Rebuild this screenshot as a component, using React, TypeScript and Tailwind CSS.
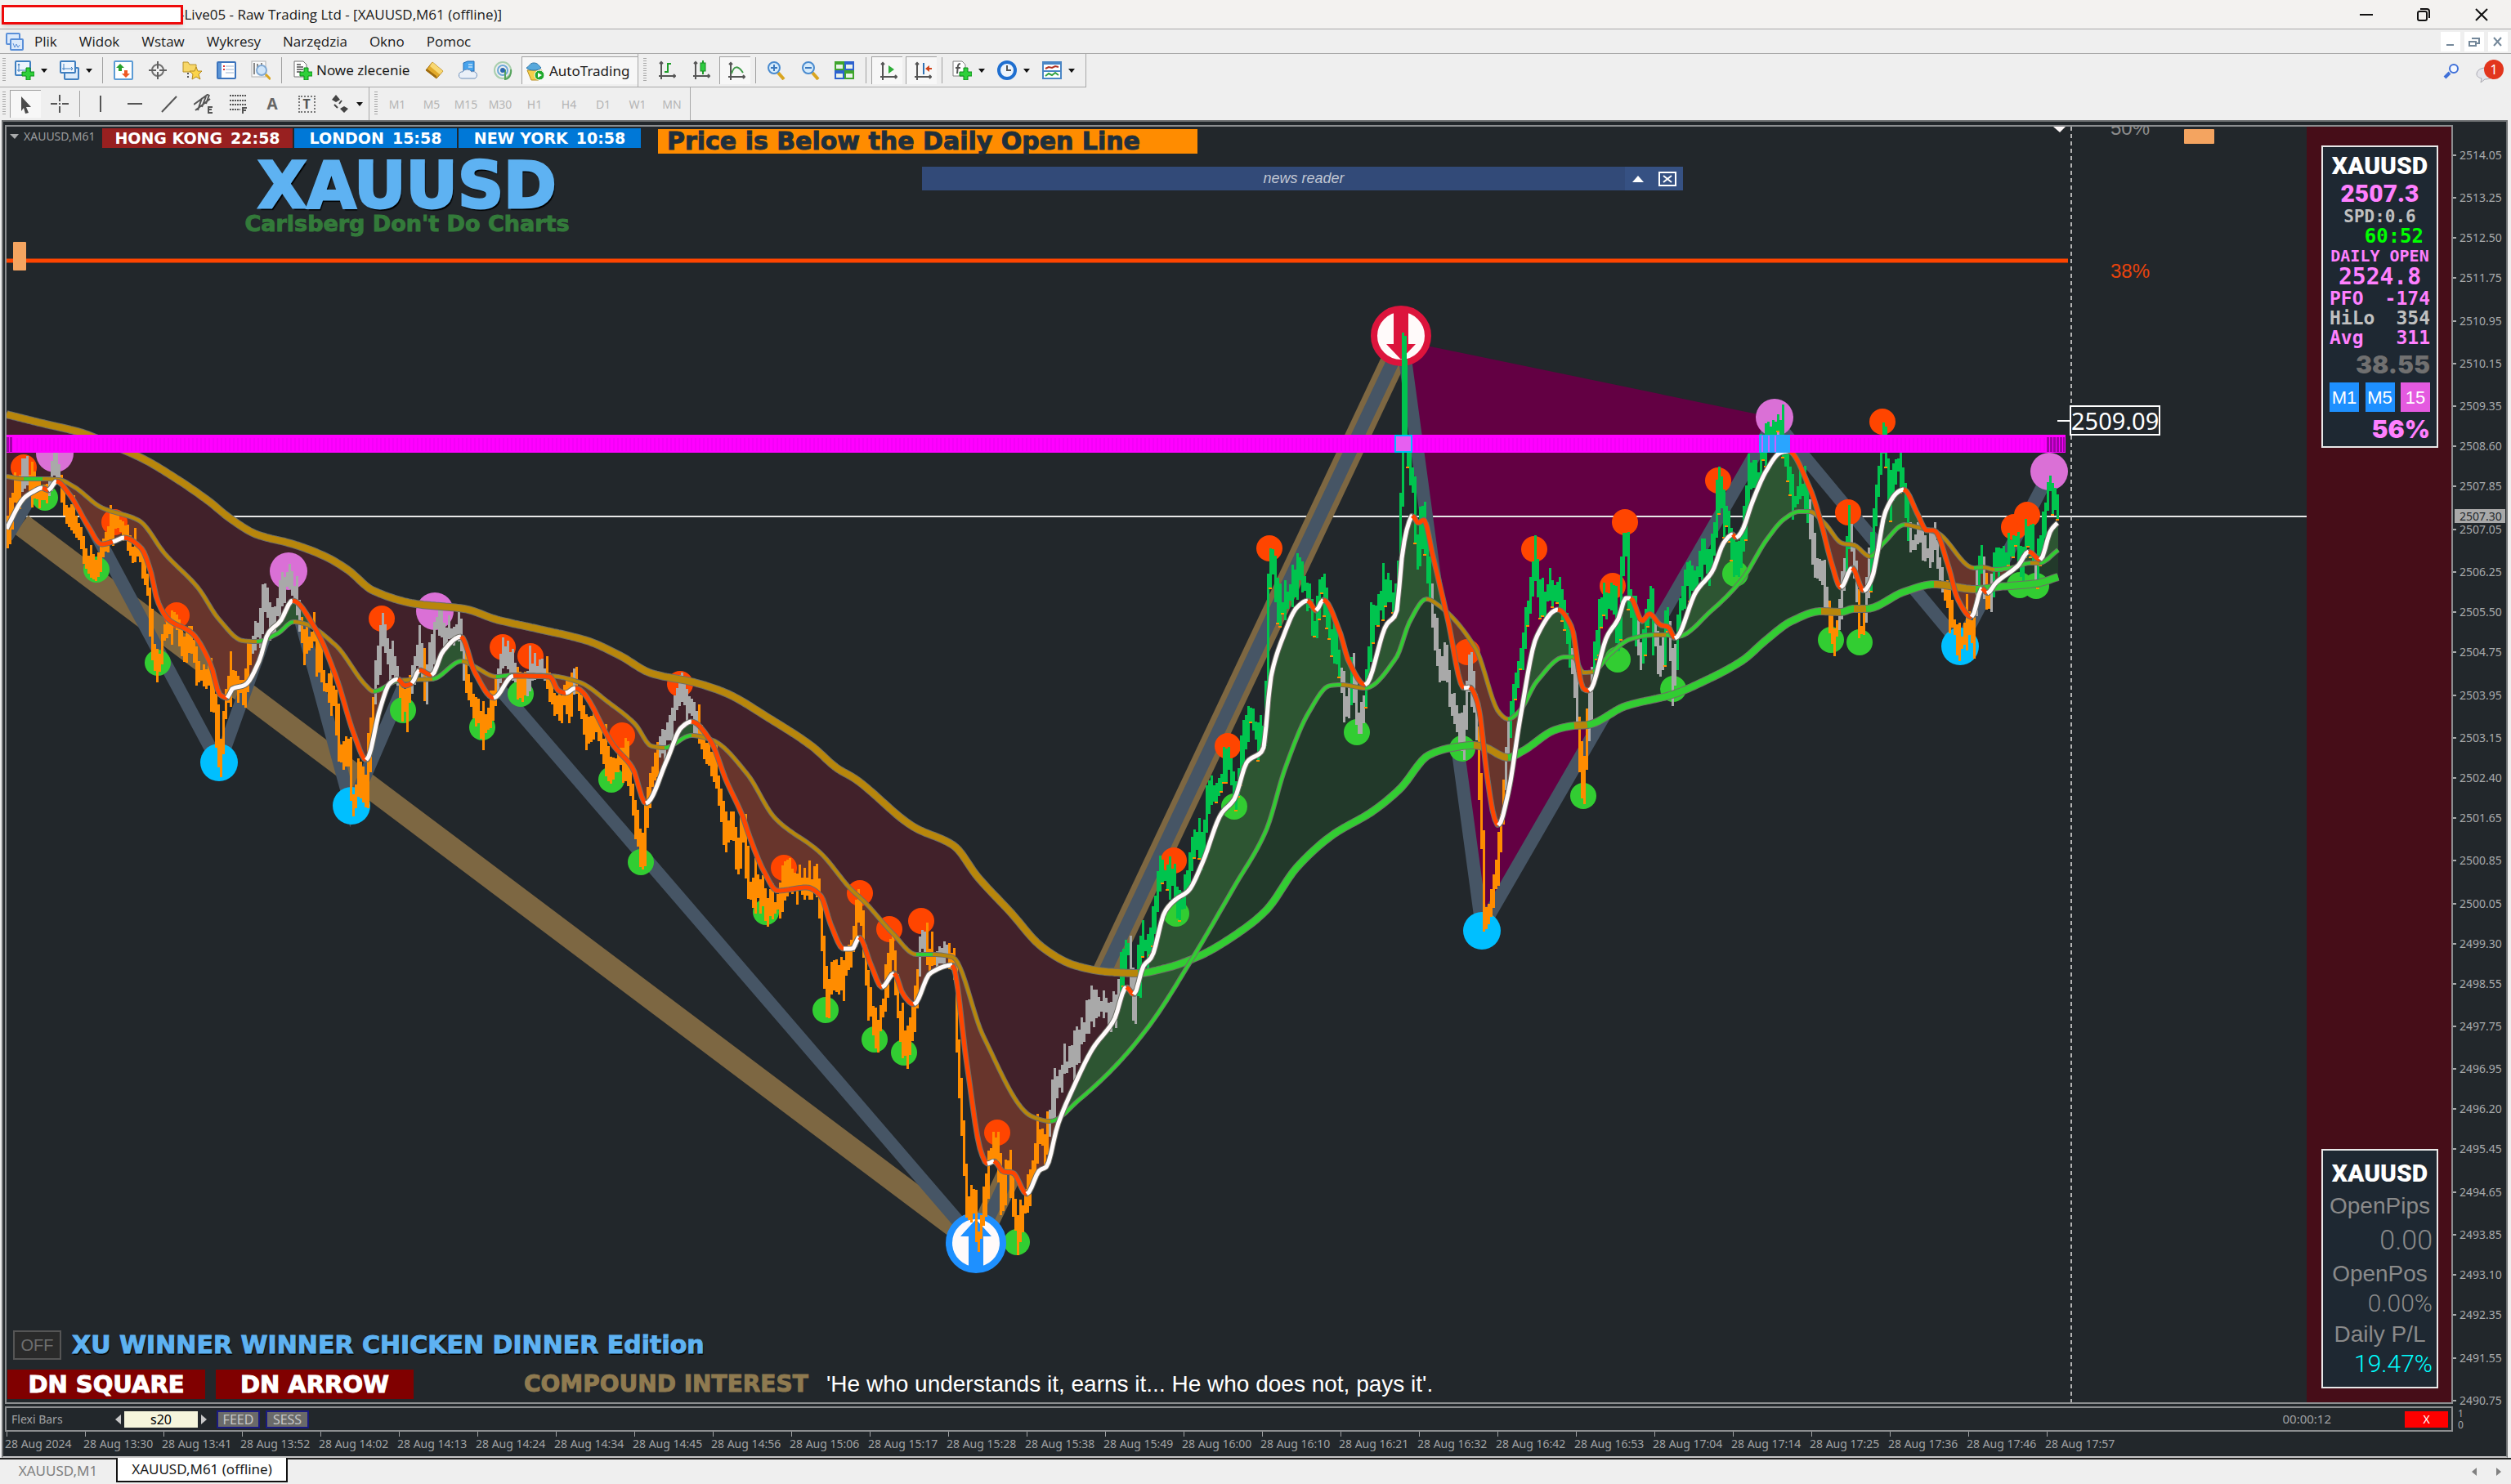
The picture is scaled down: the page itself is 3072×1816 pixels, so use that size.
import React from 'react';

type Point = [number, number];
type Segment = { color: string; points: Point[] };

const UP = '#32cd32';
const DOWN = '#b8860b';
const FAST_UP = '#fffafa';
const FAST_DOWN = '#ff4500';

const parse = (text: string): Point[] =>
  text
    .trim()
    .split(/\s+/)
    .map(pair => pair.split(',').map(Number) as Point);

// Each entry starts where the previous one ended, so the line stays joined
const buildSegments = (parts: [string, string][]): Segment[] => {
  let last: Point | null = null;
  return parts.map(([color, text]) => {
    const own = parse(text);
    const points = last ? [last, ...own] : own;
    last = own[own.length - 1];
    return { color, points };
  });
};

const slow = buildSegments([
  [DOWN, '8,507 52,518 98,529 131,542 176,562 216,586 255,613 281,634 314,654 359,666 398,681 425,697 457,723 509,739 568,745 607,758 660,770 718,784 758,802 797,824 849,835 888,848 941,879 993,913 1024,940 1046,953 1118,1012 1167,1035 1196,1073 1236,1116 1275,1159 1314,1181 1353,1189 1392,1191'],
  [UP, '1425,1185 1467,1170 1510,1145 1549,1114 1587,1061 1630,1022 1679,993 1713,965 1748,924 1776,915 1803,912'],
  [DOWN, '1815,914 1845,927'],
  [UP, '1863,919 1903,893 1926,888'],
  [DOWN, '1942,887'],
  [UP, '1989,864 2046,850 2086,833 2132,808 2161,783 2192,760 2228,748'],
  [DOWN, '2252,749'],
  [UP, '2268,745'],
  [DOWN, '2283,745'],
  [UP, '2330,724 2366,715'],
  [DOWN, '2417,721'],
  [UP, '2446,718 2491,714 2518,706'],
]);

const mid = buildSegments([
  [DOWN, '8,583 29,586'],
  [UP, '52,586'],
  [DOWN, '72,587 91,596 124,621 170,637 202,678 242,719 268,758 297,784 314,785'],
  [UP, '340,775 359,761'],
  [DOWN, '372,763 411,790 447,838 457,846'],
  [UP, '487,833'],
  [DOWN, '500,832 529,831'],
  [UP, '565,809'],
  [DOWN, '581,816 607,828'],
  [UP, '627,826'],
  [DOWN, '673,827 709,835 745,860 777,886 797,913 813,915'],
  [UP, '846,900'],
  [DOWN, '872,906 914,947 948,1001 1004,1044 1040,1087 1059,1105 1092,1142 1121,1168'],
  [UP, '1141,1168'],
  [DOWN, '1165,1171 1203,1268 1262,1366 1285,1372'],
  [UP, '1320,1346 1366,1303 1409,1251 1458,1174 1510,1085 1549,1016 1572,941 1601,872 1627,839 1641,838'],
  [DOWN, '1670,842'],
  [UP, '1708,805 1725,760 1745,733'],
  [DOWN, '1759,740 1805,793 1834,872 1845,880'],
  [UP, '1860,869 1880,834 1914,804 1925,804'],
  [DOWN, '1937,823 1949,822'],
  [UP, '1970,800 1995,782 2023,777'],
  [DOWN, '2038,777'],
  [UP, '2052,779 2094,747 2132,708 2161,661 2183,635 2201,626 2214,626'],
  [DOWN, '2232,640 2254,665 2268,667 2288,681'],
  [UP, '2304,665 2330,642'],
  [DOWN, '2345,645 2370,652 2415,695'],
  [UP, '2426,694'],
  [DOWN, '2440,697'],
  [UP, '2460,695 2484,689'],
  [DOWN, '2495,689'],
  [UP, '2518,673'],
]);

const fast = buildSegments([
  [FAST_UP, '8,647 29,610 40,602 52,597'],
  [FAST_DOWN, '59,600'],
  [FAST_UP, '69,589'],
  [FAST_DOWN, '85,605 108,644 124,666 138,663'],
  [FAST_UP, '152,658'],
  [FAST_DOWN, '173,671 184,698 193,736 206,758 235,775 258,814 269,850 278,854'],
  [FAST_UP, '284,843 300,838 317,809 328,775 343,760 358,735'],
  [FAST_DOWN, '385,768 411,828 434,901 448,930'],
  [FAST_UP, '465,867 477,836 487,831'],
  [FAST_DOWN, '495,839 504,836'],
  [FAST_UP, '513,820'],
  [FAST_DOWN, '528,826'],
  [FAST_UP, '542,797 564,779'],
  [FAST_DOWN, '581,823 604,854'],
  [FAST_UP, '628,827'],
  [FAST_DOWN, '673,828 683,845 692,848'],
  [FAST_UP, '704,842'],
  [FAST_DOWN, '751,913 774,940 790,983'],
  [FAST_UP, '816,930 833,891 846,883'],
  [FAST_DOWN, '869,906 888,954 909,1000 916,1021 935,1067 951,1090 987,1086 1004,1096 1017,1133 1032,1161'],
  [FAST_UP, '1043,1161 1051,1147'],
  [FAST_DOWN, '1066,1182 1079,1208'],
  [FAST_UP, '1094,1191'],
  [FAST_DOWN, '1105,1217 1118,1229'],
  [FAST_UP, '1138,1191 1165,1181'],
  [FAST_DOWN, '1183,1303 1200,1409 1208,1424'],
  [FAST_UP, '1216,1421'],
  [FAST_DOWN, '1228,1434 1239,1435 1256,1461'],
  [FAST_UP, '1272,1432 1280,1428 1294,1377 1314,1329 1337,1283 1363,1248 1378,1208'],
  [FAST_DOWN, '1387,1217'],
  [FAST_UP, '1399,1182 1409,1171 1425,1116 1438,1101 1454,1090 1471,1056 1494,996 1510,978 1526,932 1545,918 1555,828 1570,779 1587,743 1600,735'],
  [FAST_DOWN, '1610,747'],
  [FAST_UP, '1619,734'],
  [FAST_DOWN, '1639,773 1650,809 1670,838'],
  [FAST_UP, '1696,765 1708,751 1716,675 1722,645 1728,631'],
  [FAST_DOWN, '1735,640 1742,636 1753,680 1771,757 1791,842'],
  [FAST_UP, '1798,841'],
  [FAST_DOWN, '1808,861 1820,954 1828,1000 1833,1010'],
  [FAST_UP, '1845,971 1860,878 1880,779 1906,746'],
  [FAST_DOWN, '1923,768 1934,834 1938,844 1944,845'],
  [FAST_UP, '1966,779 1980,757 1989,732 1995,732'],
  [FAST_DOWN, '2009,760 2018,751 2032,765 2041,767 2049,781'],
  [FAST_UP, '2075,724 2095,699 2109,664 2120,654'],
  [FAST_DOWN, '2124,658'],
  [FAST_UP, '2131,650 2144,614 2161,576 2178,554 2188,552'],
  [FAST_DOWN, '2214,597 2228,640 2241,690 2252,719'],
  [FAST_UP, '2266,695'],
  [FAST_DOWN, '2280,723'],
  [FAST_UP, '2290,708 2297,676 2306,628 2322,602 2329,599'],
  [FAST_DOWN, '2346,629 2357,649 2366,649 2384,694 2395,733 2412,755'],
  [FAST_UP, '2425,720'],
  [FAST_DOWN, '2431,726'],
  [FAST_UP, '2442,713 2469,692 2482,675'],
  [FAST_DOWN, '2496,685'],
  [FAST_UP, '2509,649 2517,640'],
]);

const price = parse(`
8,661 13,612 23,590 29,575 36,593 56,605 65,559 71,581 78,620 85,635 98,659 103,688 118,697 127,659 139,634 153,649
160,676 170,668 180,722 186,790 194,811 199,770 214,753 225,794 230,765 242,828 255,819 261,862 268,935 273,872
281,823 297,843 306,790 315,765 321,727 332,760 341,727 351,702 359,727 372,785 384,777 395,838 408,848 415,930
425,916 430,988 438,950 447,974 451,896 460,824 466,758 474,804 483,819 494,867 503,833 511,785 519,843 532,756
542,775 562,768 572,843 590,889 601,862 614,799 627,814 637,848 649,814 666,826 681,867 692,848 702,828 718,906
728,877 745,950 760,916 771,964 786,1051 790,983 800,930 816,891 831,838 846,867 856,906 872,930 886,1016 896,998
899,1050 909,1010 916,1096 925,1073 936,1113 948,1107 961,1073 981,1085 1000,1085 1010,1228 1020,1182 1027,1199
1040,1159 1051,1102 1059,1199 1070,1268 1082,1217 1090,1145 1098,1240 1106,1285 1118,1240 1126,1136 1136,1176
1156,1159 1167,1188 1170,1280 1177,1389 1181,1475 1190,1463 1195,1521 1203,1475 1209,1418 1218,1395 1224,1469
1232,1418 1244,1512 1255,1458 1263,1435 1270,1377 1278,1406 1288,1331 1301,1303 1311,1297 1320,1268 1334,1234
1347,1228 1363,1240 1373,1171 1379,1148 1386,1234 1396,1148 1405,1165 1418,1067 1435,1073 1439,1116 1451,1079
1461,1027 1469,1044 1477,970 1487,970 1502,930 1510,976 1528,866 1539,912 1547,889 1551,707 1554,675 1567,751
1587,691 1601,729 1607,779 1616,702 1627,779 1636,806 1646,872 1653,828 1661,889 1670,845 1676,773 1687,729
1695,713 1705,740 1712,669 1714,548 1716,417 1719,543 1728,592 1733,702 1739,614 1747,697 1753,768 1762,834
1768,812 1774,861 1788,910 1797,806 1805,878 1811,998 1815,1130 1825,1097 1834,1026 1842,916 1848,861 1860,795
1868,746 1877,680 1883,735 1894,724 1907,718 1917,779 1926,834 1935,971 1943,867 1952,779 1960,740 1973,724
1979,801 1983,697 1987,642 1992,724 2006,801 2018,724 2023,779 2032,806 2038,746 2047,839 2052,757 2063,697
2072,713 2081,680 2092,691 2102,592 2112,636 2124,697 2132,631 2141,570 2150,590 2155,543 2173,521 2179,515
2183,558 2194,615 2203,594 2214,629 2219,690 2228,704 2234,733 2240,783 2248,761 2254,708 2261,640 2268,690
2275,783 2286,704 2292,626 2297,583 2303,519 2310,601 2321,558 2328,594 2338,672 2346,647 2357,679 2365,647
2371,697 2379,726 2388,761 2399,786 2406,761 2413,783 2417,711 2422,676 2431,747 2438,697 2442,672 2451,686
2465,654 2471,697 2480,640 2490,701 2500,633 2506,586 2511,606 2517,629`);

const interpolate = (points: Point[]) => (x: number) => {
  const i = points.findIndex(p => p[0] >= x);
  if (i <= 0) return i === 0 ? points[0][1] : points[points.length - 1][1];
  const [x0, y0] = points[i - 1];
  const [x1, y1] = points[i];
  return y0 + ((y1 - y0) * (x - x0)) / (x1 - x0 || 1);
};

// Joined segments repeat their shared point, which is dropped here
const allPoints = (segments: Segment[]) =>
  segments.flatMap(s => s.points).filter((p, i, list) => i === 0 || p[0] > list[i - 1][0]);

// Monotone cubic: smooth, and never past a turning point
const smooth = (points: Point[]) => {
  const slopes = points.slice(1).map((p, i) => (p[1] - points[i][1]) / (p[0] - points[i][0]));
  const tangents = points.map((_, i) => {
    const a = slopes[i - 1];
    const b = slopes[i];
    if (a === undefined) return b;
    if (b === undefined) return a;
    return a * b <= 0 ? 0 : (2 * a * b) / (a + b);
  });
  return (x: number) => {
    const i = points.findIndex(p => p[0] >= x);
    if (i <= 0) return i === 0 ? points[0][1] : points[points.length - 1][1];
    const [x0, y0] = points[i - 1];
    const [x1, y1] = points[i];
    const h = x1 - x0;
    const t = (x - x0) / h;
    return (
      y0 * (2 * t ** 3 - 3 * t ** 2 + 1) +
      h * tangents[i - 1] * (t ** 3 - 2 * t ** 2 + t) +
      y1 * (3 * t ** 2 - 2 * t ** 3) +
      h * tangents[i] * (t ** 3 - t ** 2)
    );
  };
};

const slowAt = smooth(allPoints(slow));
const midAt = smooth(allPoints(mid));
const fastAt = smooth(allPoints(fast));
const priceAt = interpolate(price);

const trace = (at: (x: number) => number, from: number, to: number) => {
  let d = `M${from} ${at(from).toFixed(1)}`;
  for (let x = from + 3; x < to; x += 3) d += `L${x} ${at(x).toFixed(1)}`;
  return `${d}L${to} ${at(to).toFixed(1)}`;
};

// Clouds between two averages, one path per colour
const cloud = (a: (x: number) => number, b: (x: number) => number, above: boolean) => {
  let d = '';
  for (let x = 8; x < 2518; x += 2) {
    const ya = a(x + 1);
    const yb = b(x + 1);
    if (ya < yb === above) d += `M${x} ${Math.round(ya)}H${x + 2}V${Math.round(yb)}H${x}Z`;
  }
  return d;
};

const noise = (n: number) => {
  const v = Math.sin(n * 12.9898) * 43758.5453;
  return v - Math.floor(v);
};

const bars: Record<string, string> = { '#ff8c00': '', '#a9a9a9': '', '#00c44e': '' };
let closeTicks = '';
for (let x = 9; x <= 2517; x += 3) {
  const from = priceAt(x - 3);
  const to = priceAt(x);
  const i = Math.round(x / 3);
  const top = Math.round(Math.min(from, to) - 2 - noise(i) * noise(i + 7) * 34);
  const bottom = Math.round(Math.max(from, to) + 6 + noise(i + 400) * noise(i + 31) * 34);
  const overMid = to < midAt(x);
  const overSlow = to < slowAt(x);
  const color = overMid && overSlow ? '#00c44e' : overMid || overSlow ? '#a9a9a9' : '#ff8c00';
  bars[color] += `M${x} ${top}V${bottom}`;
  if (color === '#00c44e' && noise(i + 90) > 0.6) closeTicks += `M${x - 2} ${bottom}h4`;
}

const swings: { color: string; r: number; at: string }[] = [
  {
    color: '#ff4500',
    r: 16,
    at: '29,572 140,639 216,753 467,757 615,792 649,803 832,837 761,900 959,1062 1052,1093 1088,1137 1127,1127 1220,1386 1436,1053 1502,913 1553,671 1795,798 1877,672 1988,639 1973,717 2102,588 2303,516 2261,627 2464,645 2480,630',
  },
  {
    color: '#32cd32',
    r: 16,
    at: '55,609 118,697 193,811 493,869 590,890 637,849 748,954 784,1055 937,1116 1010,1236 1070,1272 1106,1288 1244,1520 1439,1118 1510,987 1660,896 1789,916 1937,974 1979,807 2047,843 2123,702 2240,783 2275,786 2471,716 2491,717',
  },
  { color: '#da70d6', r: 23, at: '67,555 353,699 532,748 2171,511 2507,577' },
  { color: '#00bfff', r: 23, at: '268,933 430,986 1813,1139 2398,791' },
];

interface AverageProps {
  segments: Segment[];
  at: (x: number) => number;
  width: number;
}

const Average = ({ segments, at, width }: AverageProps) => (
  <g fill="none" strokeLinejoin="round">
    <path d={trace(at, 8, 2518)} stroke="#6e6e66" strokeWidth={width + 2} />
    {segments.map(({ color, points }, i) => (
      <path key={i} d={trace(at, points[0][0], points[points.length - 1][0])} stroke={color} strokeWidth={width} />
    ))}
  </g>
);

const PriceChart = () => (
  <svg viewBox="8 155 2814 1561" className="block h-auto w-full" role="img" aria-label="XAUUSD M61 price chart">
    <path d="M1716 417L2170 511L1813 1135Z" fill="#630043" />
    <path d="M8 632H2822" stroke="#e8e8e8" strokeWidth="2" />
    <path d="M26 642L1195 1521" stroke="#7d6742" strokeWidth="28" />
    <path d="M1195 1521L1716 417" stroke="#7d6742" strokeWidth="30" />
    <path
      d="M8 657L67 559L268 935L352 700L430 988L532 751L1195 1521L1716 417L1813 1135L2171 515L2398 788L2507 580"
      fill="none"
      stroke="#465565"
      strokeWidth="16"
    />
    <g shapeRendering="crispEdges">
      <path d={cloud(slowAt, midAt, true)} fill="#41212a" />
      <path d={cloud(midAt, slowAt, true)} fill="#22392a" />
      <path d={cloud(midAt, fastAt, true)} fill="#68352c" />
      <path d={cloud(fastAt, midAt, true)} fill="#2d5532" />
    </g>
    {swings.map(s => (
      <g key={s.at} fill={s.color}>
        {parse(s.at).map(([x, y]) => (
          <circle key={`${x}-${y}`} cx={x} cy={y} r={s.r} />
        ))}
      </g>
    ))}
    <g>
      <circle cx="1714" cy="411" r="33" fill="#fffafa" stroke="#dc143c" strokeWidth="8" />
      <path d="M1705 382h18v39h9l-18 19l-18 -19h9z" fill="#dc143c" />
      <circle cx="1194" cy="1521" r="33" fill="#fffafa" stroke="#1e90ff" strokeWidth="8" />
      <path d="M1185 1550h18v-37h10l-19 -21l-19 21h10z" fill="#1e90ff" />
    </g>
    <g strokeWidth="3" shapeRendering="crispEdges">
      {Object.entries(bars).map(([color, d]) => (
        <path key={color} d={d} stroke={color} />
      ))}
      <path d="M1716 414V560M1720 440V552" stroke="#00c44e" />
      <path d={closeTicks} stroke="#ff8c00" strokeWidth="2" />
    </g>
    <Average segments={slow} at={slowAt} width={8} />
    <Average segments={mid} at={midAt} width={4} />
    <Average segments={fast} at={fastAt} width={5} />

    <path d="M8 319H2530" stroke="#ff4500" strokeWidth="5" />
    <rect x="16" y="296" width="16" height="35" rx="1" fill="#f4a460" />
    <rect x="2672" y="158" width="37" height="18" rx="1" fill="#f4a460" />

    {/* supply zone */}
    <rect x="8" y="532" width="2519" height="22" fill="#ff00ff" />
    <path d="M20 544H2502" stroke="#f400f8" strokeWidth="16" strokeDasharray="2 3" />
    <path d="M8 544H15M2504 544H2526" stroke="#a000a8" strokeWidth="18" strokeDasharray="3 1" />
    <rect x="1707" y="533" width="20" height="20" fill="#e65ff0" stroke="#00bfff" strokeWidth="2" />
    <rect x="2152" y="532" width="38" height="22" fill="#29a5ff" />
    <path d="M2156 533V553M2164 533V553M2172 533V553" stroke="#d05cff" strokeWidth="2" />

    <path d="M2534 155V1716" stroke="#b4b4b4" strokeWidth="2" strokeDasharray="5 4" />
    <path d="M2512 155h15l-7 7z" fill="#fffafa" />
    <path d="M2517 515H2533" stroke="#ffffff" strokeWidth="2" />
    <rect x="2533" y="497" width="109" height="35" fill="#22272b" stroke="#ffffff" strokeWidth="2" />
    <g className="font-['Noto_Sans',sans-serif] text-[29px]">
      <text x="2534" y="526" fill="#ffffff">2509.09</text>
    </g>
    <g className="font-['Liberation_Sans',sans-serif] text-[24px]">
      <text x="2582" y="165" fill="#8c8c8c">50%</text>
      <text x="2582" y="340" fill="#e8430c">38%</text>
    </g>
  </svg>
);

const SCALE = [
  2514.05, 2513.25, 2512.5, 2511.75, 2510.95, 2510.15, 2509.35, 2508.6, 2507.85, 2507.05, 2506.25, 2505.5, 2504.75,
  2503.95, 2503.15, 2502.4, 2501.65, 2500.85, 2500.05, 2499.3, 2498.55, 2497.75, 2496.95, 2496.2, 2495.45, 2494.65,
  2493.85, 2493.1, 2492.35, 2491.55, 2490.75,
];

const PriceScale = () => (
  <svg
    viewBox="3001 153 65 1628"
    className="block h-[1628px] w-[65px] shrink-0 font-['Noto_Sans',sans-serif] text-[14px]"
    fill="#a8aaab"
  >
    {SCALE.map(value => {
      const y = Math.round(190 + (2514.05 - value) * 65.4);
      return (
        <g key={value}>
          <path d={`M3001 ${y}h4`} stroke="#a8aaab" strokeWidth="2" />
          <text x="3009" y={y + 5}>{value.toFixed(2)}</text>
        </g>
      );
    })}
    <rect x="3003" y="623" width="62" height="17" fill="#a9a9a9" />
    <text x="3009" y="637" fill="#22272b">2507.30</text>
    <g className="text-[12px]">
      <text x="3007" y="1734">1</text>
      <text x="3007" y="1748">0</text>
    </g>
  </svg>
);

const TIMES = [
  '2024', '13:30', '13:41', '13:52', '14:02', '14:13', '14:24', '14:34', '14:45', '14:56', '15:06', '15:17', '15:28',
  '15:38', '15:49', '16:00', '16:10', '16:21', '16:32', '16:42', '16:53', '17:04', '17:14', '17:25', '17:36', '17:46',
  '17:57',
];

/* ---------- toolbar icons ---------- */

const Icon = ({ children }: { children: React.ReactNode }) => (
  <svg viewBox="0 0 24 24" className="size-6 shrink-0" fill="none" aria-hidden="true">
    {children}
  </svg>
);

const Plus = () => <path d="M14 9h5v5h5v5h-5v5h-5v-5h-5v-5h5z" fill="#2fd03a" stroke="#0b8a16" />;

const NewChartIcon = () => (
  <Icon>
    <rect x="1" y="1" width="18" height="17" rx="1" fill="#eef5fd" stroke="#3f7fc0" strokeWidth="2" />
    <path d="M5 4v10M3 12h12M4 6l1-2 1 2" stroke="#3f7fc0" />
    <Plus />
  </Icon>
);

const ProfilesIcon = () => (
  <Icon>
    <rect x="6" y="9" width="17" height="14" rx="1" fill="#dcebfa" stroke="#3f7fc0" strokeWidth="2" />
    <rect x="1" y="1" width="18" height="14" rx="1" fill="#eef5fd" stroke="#3f7fc0" strokeWidth="2" />
    <path d="M5 4v8M3 10h13M14 8l2 2-2 2" stroke="#3f7fc0" />
  </Icon>
);

const MarketIcon = () => (
  <Icon>
    <rect x="1" y="1" width="22" height="22" rx="1" fill="#fff" stroke="#5b9bd5" strokeWidth="2" />
    <path d="M8 4l5 5h-3v4H6V9H3z" fill="#27a02b" />
    <path d="M15 21l-5-5h3v-4h4v4h3z" fill="#ee5a24" />
  </Icon>
);

const CrosshairIcon = () => (
  <Icon>
    <circle cx="12" cy="12" r="7" stroke="#707070" strokeWidth="2" />
    <path d="M12 1v9M12 14v9M1 12h9M14 12h9" stroke="#606060" strokeWidth="2" />
  </Icon>
);

const NavigatorIcon = () => (
  <Icon>
    <path d="M1 2h6l2 3h8v9H1z" fill="#f7d768" stroke="#b8922a" />
    <path d="M7 15v8" stroke="#555" strokeWidth="2" strokeDasharray="2 2" />
    <path d="M17 8l2 5h5l-4 4 2 6-5-3-5 3 1-6-4-4h6z" fill="#fbd44a" stroke="#b58a20" />
  </Icon>
);

const TerminalIcon = () => (
  <Icon>
    <rect x="1" y="2" width="22" height="20" rx="1" fill="#fff" stroke="#3c74bd" strokeWidth="2" />
    <rect x="2" y="3" width="4" height="18" fill="#5c95d6" />
    <path d="M8 7h2M8 11h2" stroke="#d33" strokeWidth="2" />
    <path d="M11 7h10M11 11h10M11 15h10" stroke="#9db4d0" />
  </Icon>
);

const TesterIcon = () => (
  <Icon>
    <rect x="1" y="1" width="17" height="19" fill="#fafafa" stroke="#b0b0b0" />
    <path d="M4 3v14M8 4v9M13 3v6" stroke="#888" strokeWidth="2" />
    <circle cx="13" cy="12" r="6" fill="#cfe5fa" stroke="#7fa8d2" strokeWidth="2" />
    <path d="M18 17l6 6" stroke="#d9a520" strokeWidth="3" />
  </Icon>
);

const OrderIcon = () => (
  <Icon>
    <path d="M2 1h11l4 4v15H2z" fill="#fff" stroke="#707070" />
    <path d="M5 5h5M5 8h8M5 11h8M5 14h5" stroke="#777" strokeWidth="2" />
    <Plus />
  </Icon>
);

const GoldIcon = () => (
  <Icon>
    <path d="M10 2l13 11-8 9L2 12z" fill="#e2aa2b" stroke="#a87412" />
    <path d="M10 2l13 11-4 4L7 7z" fill="#f8d873" />
    <path d="M2 12l13 10v-3L3 10z" fill="#9c6a10" />
  </Icon>
);

const CloudIcon = () => (
  <Icon>
    <path d="M6 3l5-2h8v12H6z" fill="#47a3ec" stroke="#1f6db8" />
    <path d="M12 5h5M12 8h5" stroke="#fff" />
    <path d="M4 22a4 4 0 0 1 1-8 6 5 0 0 1 11 0 4 4 0 0 1 4 8z" fill="#eaf0f8" stroke="#6d8fba" />
  </Icon>
);

const SignalIcon = () => (
  <Icon>
    <circle cx="12" cy="12" r="10" stroke="#a9cfae" strokeWidth="2" />
    <circle cx="12" cy="12" r="6" stroke="#6ba8d8" strokeWidth="2" />
    <path d="M12 12h3v11c5-1 8-6 7-12" stroke="#55a35c" strokeWidth="2" />
    <circle cx="12" cy="12" r="3" fill="#2c69b0" />
  </Icon>
);

const AutoIcon = () => (
  <Icon>
    <path d="M2 11h18l-4 12H7z" fill="#f4cf4a" stroke="#b98d1d" />
    <path d="M1 8c3-1 4-6 9-6s6 3 9 6c-3 4-15 4-18 0z" fill="#58a9dc" stroke="#2d76a9" />
    <circle cx="17" cy="17" r="6" fill="#20a82c" stroke="#fff" />
    <path d="M15 14l5 3-5 3z" fill="#fff" />
  </Icon>
);

const Axes = () => <path d="M6 2v21M3 19h20M4 4l2-2 2 2M21 17l2 2-2 2" stroke="#555" strokeWidth="2" />;

const BarsIcon = () => (
  <Icon>
    <Axes />
    <path d="M14 3v12M14 4h4M10 14h4" stroke="#1e9e2a" strokeWidth="2" />
  </Icon>
);

const CandlesIcon = () => (
  <Icon>
    <Axes />
    <path d="M15 0v17" stroke="#1e9e2a" strokeWidth="2" />
    <rect x="12" y="3" width="6" height="10" fill="#2ecc40" stroke="#148a20" />
  </Icon>
);

const LineIcon = () => (
  <Icon>
    <Axes />
    <path d="M7 15c3-10 8-10 14-1" stroke="#3f9a48" strokeWidth="2" />
  </Icon>
);

const ZoomIcon = ({ plus }: { plus?: boolean }) => (
  <Icon>
    <path d="M15 15l7 8" stroke="#d9a520" strokeWidth="4" />
    <circle cx="10" cy="9" r="7" fill="#d6ebfb" stroke="#4a8bcf" strokeWidth="2" />
    <path d={plus ? 'M6 9h8M10 5v8' : 'M6 9h8'} stroke="#3a78bd" strokeWidth="2" />
  </Icon>
);

const TileIcon = () => (
  <Icon>
    <path d="M0 1h12v11H0zM12 12h12v11H12z" fill="#3fa52c" />
    <path d="M12 1h12v11H12zM0 12h12v11H0z" fill="#2d62cf" />
    <path d="M2 5h8v5H2zM14 5h8v5h-8zM2 16h8v5H2zM14 16h8v5h-8z" fill="#e9f3ea" />
  </Icon>
);

const ScrollIcon = () => (
  <Icon>
    <Axes />
    <path d="M13 5l7 5-7 5z" fill="#2fae3a" />
  </Icon>
);

const ShiftIcon = () => (
  <Icon>
    <Axes />
    <path d="M14 2v14" stroke="#2f72b5" strokeWidth="2" />
    <path d="M16 9l5-4v3h3v2h-3v3z" fill="#d0431a" />
  </Icon>
);

const IndicatorIcon = () => (
  <Icon>
    <path d="M1 1h11l4 4v14H1z" fill="#fff" stroke="#808080" />
    <path d="M10 4c-4 0-3 4-4 12M4 9h6" stroke="#555" strokeWidth="2" />
    <Plus />
  </Icon>
);

const ClockIcon = () => (
  <Icon>
    <circle cx="12" cy="12" r="10" fill="#eef5fc" stroke="#1f6fd0" strokeWidth="4" />
    <path d="M12 6v6h5" stroke="#555" strokeWidth="2" />
  </Icon>
);

const TemplateIcon = () => (
  <Icon>
    <rect x="1" y="2" width="22" height="20" fill="#fff" stroke="#4a86c5" strokeWidth="2" />
    <path d="M2 4h20M2 13h20" stroke="#4a86c5" strokeWidth="2" />
    <path d="M4 10l4-2 4 1 4-2 4 1" stroke="#b03020" strokeWidth="2" />
    <path d="M4 19l4-3 4 2 4-3 4 3" stroke="#30a040" strokeWidth="2" />
  </Icon>
);

const Caret = () => (
  <svg viewBox="0 0 8 5" className="h-[5px] w-2 shrink-0" aria-hidden="true">
    <path d="M0 0h8L4 5z" fill="#111" />
  </svg>
);

const Grip = () => (
  <span className="mx-[3px] h-[30px] w-1 shrink-0 bg-[repeating-linear-gradient(#a8a8a8_0_1px,#efefef_1px_3px)]" />
);

const Divider = () => <span className="h-8 w-px shrink-0 bg-[#a0a0a0]" />;

interface ToolProps {
  label: string;
  children: React.ReactNode;
  pressed?: boolean;
  menu?: boolean;
}

const Tool = ({ label, children, pressed, menu }: ToolProps) => (
  <button
    type="button"
    aria-label={label}
    className={
      'flex shrink-0 items-center justify-center ' +
      (menu ? 'w-[55px] gap-2 ' : pressed ? 'mx-[2px] w-[38px] ' : 'w-[42px] ') +
      (pressed ? 'h-[34px] border-t border-l border-[#a0a0a0] bg-[#f7f7f7]' : 'h-[34px]')
    }
  >
    {children}
    {menu && <Caret />}
  </button>
);

const TitleBar = () => (
  <header className="flex h-[35px] items-center justify-between bg-[#f3f2f0] text-[#1a1a1a]">
    <div className="flex items-center">
      <span className="z-10 ml-[2px] h-6 w-[222px] border-[3px] border-[#ee0a0a] bg-white shadow-md" />
      <h1 className="-ml-1 font-['Open_Sans',sans-serif] text-[17px]">-Live05 - Raw Trading Ltd - [XAUUSD,M61 (offline)]</h1>
    </div>
    <div className="flex">
      <button type="button" aria-label="Minimize" className="flex w-[70px] justify-center">
        <svg viewBox="0 0 16 16" className="size-4"><path d="M0 8h16" stroke="#111" strokeWidth="2" /></svg>
      </button>
      <button type="button" aria-label="Restore" className="flex w-[70px] justify-center">
        <svg viewBox="0 0 16 16" className="size-4" fill="none" stroke="#111" strokeWidth="2">
          <rect x="1" y="4" width="11" height="11" rx="2" />
          <path d="M4 1h8a3 3 0 0 1 3 3v8" />
        </svg>
      </button>
      <button type="button" aria-label="Close" className="flex w-[72px] justify-center">
        <svg viewBox="0 0 16 16" className="size-4"><path d="M1 1l14 14M15 1L1 15" stroke="#111" strokeWidth="2" /></svg>
      </button>
    </div>
  </header>
);

const WINDOW_BUTTONS = [
  { label: 'Minimize chart', d: 'M3 12h9' },
  { label: 'Restore chart', d: 'M5 4h9v6h-3M2 8h8v5H2z' },
  { label: 'Close chart', d: 'M3 3l9 10M12 3L3 13' },
];

const MenuBar = () => (
  <nav className="flex h-[31px] items-center justify-between border-y border-[#a8a8a8] bg-[#efefef] pr-1">
    <div className="flex items-center gap-[27px] font-['Open_Sans',sans-serif] text-[17px] text-[#1a1a1a]">
      <div className="flex items-center gap-[13px] pl-[7px]">
        <svg viewBox="0 0 22 22" className="size-[22px]" fill="#dbe9fb" stroke="#5a8fd8" strokeWidth="2">
          <rect x="1" y="1" width="16" height="13" rx="1" />
          <rect x="6" y="8" width="15" height="13" rx="1" />
          <path d="M9 13l2 5 2-4 2 4 2-3" fill="none" strokeWidth="1" />
        </svg>
        <button type="button">Plik</button>
      </div>
      {['Widok', 'Wstaw', 'Wykresy', 'Narzędzia', 'Okno', 'Pomoc'].map(item => (
        <button key={item} type="button">{item}</button>
      ))}
    </div>
    <div className="flex gap-[5px]">
      {WINDOW_BUTTONS.map(b => (
        <button key={b.label} type="button" aria-label={b.label} className="flex h-6 w-6 items-center justify-center bg-white">
          <svg viewBox="0 0 16 16" className="size-4" fill="none">
            <path d={b.d} stroke="#74889a" strokeWidth="2" />
          </svg>
        </button>
      ))}
    </div>
  </nav>
);

const MainToolbar = () => (
  <div className="flex h-[41px] items-center justify-between bg-[#efefef]">
    <div className="flex h-full items-center border-r border-b border-[#a8a8a8] pr-[6px] font-['Noto_Sans',sans-serif] text-[17px] text-[#1a1a1a]">
      <Grip />
      <Tool label="New chart" menu><NewChartIcon /></Tool>
      <Tool label="Profiles" menu><ProfilesIcon /></Tool>
      <span className="w-[5px]" />
      <Divider />
      <span className="w-1" />
      <Tool label="Market watch"><MarketIcon /></Tool>
      <Tool label="Data window"><CrosshairIcon /></Tool>
      <Tool label="Navigator"><NavigatorIcon /></Tool>
      <Tool label="Terminal"><TerminalIcon /></Tool>
      <Tool label="Strategy tester"><TesterIcon /></Tool>
      <span className="w-1" />
      <Divider />
      <button type="button" className="ml-[13px] flex w-[152px] items-center gap-[5px] whitespace-nowrap">
        <OrderIcon />
        Nowe zlecenie
      </button>
      <Tool label="MetaEditor"><GoldIcon /></Tool>
      <Tool label="Cloud"><CloudIcon /></Tool>
      <Tool label="Signals"><SignalIcon /></Tool>
      <button
        type="button"
        className="ml-[2px] flex h-[34px] w-[142px] items-center gap-[5px] border-t border-l border-[#a0a0a0] bg-[#f7f7f7] pl-1"
      >
        <AutoIcon />
        AutoTrading
      </button>
      <span className="mr-[3px] h-full w-px bg-[#a8a8a8]" />
      <Grip />
      <Tool label="Bar chart"><BarsIcon /></Tool>
      <Tool label="Candlesticks"><CandlesIcon /></Tool>
      <Tool label="Line chart" pressed><LineIcon /></Tool>
      <span className="w-1" />
      <Divider />
      <span className="w-[3px]" />
      <Tool label="Zoom in"><ZoomIcon plus /></Tool>
      <Tool label="Zoom out"><ZoomIcon /></Tool>
      <Tool label="Tile windows"><TileIcon /></Tool>
      <span className="w-[5px]" />
      <Divider />
      <span className="w-1" />
      <Tool label="Auto scroll" pressed><ScrollIcon /></Tool>
      <Tool label="Chart shift" pressed><ShiftIcon /></Tool>
      <span className="w-1" />
      <Divider />
      <span className="w-1" />
      <Tool label="Indicators" menu><IndicatorIcon /></Tool>
      <Tool label="Periods" menu><ClockIcon /></Tool>
      <Tool label="Templates" menu><TemplateIcon /></Tool>
    </div>
    <div className="flex items-center gap-[18px] pr-[9px]">
      <button type="button" aria-label="Search">
        <svg viewBox="0 0 20 20" className="size-5" fill="none">
          <path d="M2 18l6-6" stroke="#3f70d8" strokeWidth="4" />
          <circle cx="13" cy="7" r="5" fill="#f4f8ff" stroke="#3f70d8" strokeWidth="2" />
        </svg>
      </button>
      <button type="button" aria-label="Notifications" className="relative h-7 w-9">
        <svg viewBox="0 0 36 28" className="h-7 w-9">
          <path d="M3 18c0-5 5-8 11-8s9 4 9 8-5 6-10 6l-5 4 1-5c-4-1-6-3-6-5z" fill="#e4e4ea" stroke="#a8a8b0" />
          <circle cx="24" cy="12" r="12" fill="#e2351d" />
        </svg>
        <span className="absolute top-0 right-0 w-6 text-center text-[16px] text-white">1</span>
      </button>
    </div>
  </div>
);

const DRAW_TOOLS = [
  { label: 'Vertical line', d: 'M12 2v20' },
  { label: 'Horizontal line', d: 'M3 12h18' },
  { label: 'Trend line', d: 'M3 22L21 3' },
];

const DrawToolbar = () => (
  <div className="flex h-[40px] items-center bg-[#efefef] font-['Noto_Sans',sans-serif]">
    <Grip />
    <Tool label="Cursor" pressed>
      <Icon><path d="M6 2l12 13h-6l3 7-4 1-2-7-3 4z" fill="#4a4a4a" /></Icon>
    </Tool>
    <Tool label="Crosshair">
      <Icon><path d="M12 1v8M12 15v8M1 12h8M15 12h8M12 11v2" stroke="#555" strokeWidth="2" /></Icon>
    </Tool>
    <span className="w-[3px]" />
    <Divider />
    <span className="w-1" />
    {DRAW_TOOLS.map(tool => (
      <Tool key={tool.label} label={tool.label}>
        <Icon><path d={tool.d} stroke="#555" strokeWidth="2" /></Icon>
      </Tool>
    ))}
    <Tool label="Equidistant channel">
      <Icon>
        <path d="M0 13L18 0M2 20L20 6M5 20l5-15M10 16l5-13M15 12l4-11" stroke="#555" strokeWidth="2" />
        <path d="M23 16h-5v7h5M18 19h4" stroke="#555" strokeWidth="2" />
      </Icon>
    </Tool>
    <Tool label="Fibonacci retracement">
      <Icon>
        <path d="M2 2h20M2 8h20M2 13h20M2 19h13" stroke="#555" strokeWidth="2" strokeDasharray="2 1" />
        <path d="M23 17h-5v7M18 20h4" stroke="#555" strokeWidth="2" />
      </Icon>
    </Tool>
    <Tool label="Text"><span className="text-[19px] font-bold text-[#666]">A</span></Tool>
    <Tool label="Text label">
      <span className="flex size-[21px] items-center justify-center border-2 border-dotted border-[#777] text-[16px] font-bold text-[#555]">T</span>
    </Tool>
    <Tool label="Arrows" menu>
      <Icon>
        <path d="M7 1l5 6-5 3-5-3zM17 23l5-5-5-3-5 3z" fill="#444" />
        <path d="M5 13l4 4M11 12l3-4" stroke="#444" strokeWidth="2" />
      </Icon>
    </Tool>
    <span className="mr-[3px] h-full w-px bg-[#a8a8a8]" />
    <Grip />
    {['M1', 'M5', 'M15', 'M30', 'H1', 'H4', 'D1', 'W1', 'MN'].map(period => (
      <button key={period} type="button" disabled className="w-[42px] text-center text-[14px] text-[#b4b4b4]">
        {period}
      </button>
    ))}
    <span className="ml-px h-full w-px bg-[#a8a8a8]" />
  </div>
);

/* ---------- chart overlays ---------- */

const CLOCKS = [
  { city: 'HONG KONG', time: '22:58', box: 'w-[233px] bg-[#982020]' },
  { city: 'LONDON', time: '15:58', box: 'w-[199px] bg-[#0078d7]' },
  { city: 'NEW YORK', time: '10:58', box: 'w-[223px] bg-[#0078d7]' },
];

const ChartHeader = () => (
  <div className="absolute top-[2px] left-1 flex items-start whitespace-nowrap">
    <span className="flex h-6 w-[113px] items-start gap-[6px] font-['Noto_Sans',sans-serif] text-[14px] leading-5 text-[#9a9c9e]">
      <svg viewBox="0 0 11 6" className="mt-[7px] h-[6px] w-[11px]"><path d="M0 0h11L6 6z" fill="#a8aaab" /></svg>
      XAUUSD,M61
    </span>
    <div className="flex gap-[2px]">
      {CLOCKS.map(c => (
        <span
          key={c.city}
          className={`flex h-6 items-center justify-center gap-[10px] font-['DejaVu_Sans',sans-serif] text-[19px] font-bold text-white ${c.box}`}
        >
          <span>{c.city}</span>
          <span>{c.time}</span>
        </span>
      ))}
    </div>
    <span className="mt-px ml-[21px] flex h-[30px] w-[660px] items-center bg-[#ff8c00] pl-[11px] font-['DejaVu_Sans',sans-serif] text-[30px] leading-[30px] font-bold text-[#1f2f3c] [-webkit-text-stroke:1px_#1f2f3c]">
      Price is Below the Daily Open Line
    </span>
  </div>
);

const NewsReader = () => (
  <div className="absolute top-[49px] left-[1120px] flex h-[29px] w-[931px] items-center bg-[#324a78]">
    <span className="flex-1 pl-[74px] text-center font-['Liberation_Sans',sans-serif] text-[18px] text-[#c0c6d2] italic">
      news reader
    </span>
    <button type="button" aria-label="Collapse news" className="flex h-full w-8 items-center justify-center bg-[#365183]">
      <svg viewBox="0 0 14 8" className="h-2 w-[14px]"><path d="M0 8h14L7 0z" fill="#fff" /></svg>
    </button>
    <button type="button" aria-label="Close news" className="flex h-full w-[39px] items-center justify-center bg-[#365183]">
      <svg viewBox="0 0 22 18" className="h-[18px] w-[22px]" fill="none" stroke="#fff" strokeWidth="2">
        <rect x="1" y="1" width="20" height="16" />
        <path d="M6 5l10 8M16 5L6 13" />
      </svg>
    </button>
  </div>
);

const ChartFooter = () => (
  <div className="absolute bottom-[4px] left-px flex flex-col gap-3 font-['DejaVu_Sans',sans-serif] font-bold whitespace-nowrap">
    <div className="flex items-center gap-[13px] pl-[7px]">
      <button type="button" className="h-9 w-[59px] border-2 border-[#555] bg-[#2a2a2a] font-['Liberation_Sans',sans-serif] text-[20px] font-normal text-[#6e6e6e]">
        OFF
      </button>
      <span className="text-[30px] leading-9 text-[#5eb2f2] [-webkit-text-stroke:1px_#5eb2f2] [text-shadow:1px_2px_1px_#000]">
        XU WINNER WINNER CHICKEN DINNER Edition
      </span>
    </div>
    <div className="flex items-center text-[29px] leading-9">
      <button type="button" className="h-9 w-[242px] bg-[#800000] text-white [-webkit-text-stroke:1px_#fff]">DN SQUARE</button>
      <button type="button" className="ml-[13px] h-9 w-[242px] bg-[#800000] text-white [-webkit-text-stroke:1px_#fff]">DN ARROW</button>
      <span className="ml-[135px] w-[370px] text-[28px] text-[#8f7a50] [-webkit-text-stroke:1px_#8f7a50]">COMPOUND INTEREST</span>
      <span className="font-['Liberation_Sans',sans-serif] text-[28px] font-normal text-white">
        'He who understands it, earns it... He who does not, pays it'.
      </span>
    </div>
  </div>
);

const PANEL = 'border-2 border-[#e8e8e8] bg-[#1e2832]';

const QuotePanel = () => (
  <section className={`${PANEL} flex h-[370px] flex-col px-[8px] font-['DejaVu_Sans_Mono',monospace] font-bold`}>
    <h2 className="mt-[5px] text-center font-['Roboto',sans-serif] text-[30px] leading-9 font-black text-white">XAUUSD</h2>
    <p className="text-center font-['Roboto',sans-serif] text-[30px] leading-8 font-black text-[#ff80ff]">2507.3</p>
    <p className="text-center text-[21px] leading-6 text-[#c0c0c0]">SPD:0.6</p>
    <p className="pr-2 text-right text-[24px] leading-6 text-[#00ff00]">60:52</p>
    <p className="text-center text-[20px] leading-6 text-[#ff80ff]">DAILY OPEN</p>
    <p className="text-center text-[28px] leading-7 text-[#ff80ff]">2524.8</p>
    <dl className="text-[23px] leading-6">
      <div className="flex justify-between text-[#ff80ff]"><dt>PFO</dt><dd>-174</dd></div>
      <div className="flex justify-between text-[#c0c0c0]"><dt>HiLo</dt><dd>354</dd></div>
      <div className="flex justify-between text-[#ff80ff]"><dt>Avg</dt><dd>311</dd></div>
    </dl>
    <p className="mt-[5px] text-right font-['Inter',sans-serif] text-[30px] leading-8 font-black text-[#707070]">38.55</p>
    <div className="mt-[6px] flex justify-between font-['Liberation_Sans',sans-serif] text-[22px] font-normal text-white">
      <button type="button" className="size-9 bg-[#1e90ff]">M1</button>
      <button type="button" className="size-9 bg-[#1e90ff]">M5</button>
      <button type="button" className="size-9 bg-[#e45ae0]">15</button>
    </div>
    <p className="mt-[5px] text-right font-['Inter',sans-serif] text-[30px] leading-8 font-black text-[#ff80ff]">56%</p>
  </section>
);

const PositionPanel = () => (
  <section className={`${PANEL} flex h-[293px] flex-col px-[5px] text-right font-['Liberation_Sans',sans-serif] text-[28px] leading-8 text-[#8a8a8a]`}>
    <h2 className="mt-[10px] mb-[6px] text-center font-['Roboto',sans-serif] text-[30px] leading-9 font-black text-white">XAUUSD</h2>
    <p className="text-center">OpenPips</p>
    <p className="mt-[5px] font-['Roboto',sans-serif] text-[34px] leading-10 font-light">0.00</p>
    <p className="mt-[6px] text-center">OpenPos</p>
    <p className="mt-[2px] font-['Roboto',sans-serif] text-[30px] leading-9 font-light">0.00%</p>
    <p className="mt-1 text-center">Daily P/L</p>
    <p className="mt-[2px] font-['Roboto',sans-serif] text-[30px] leading-9 font-light text-[#00ffff]">19.47%</p>
  </section>
);

const FlexiBar = () => (
  <div className="mt-[3px] flex h-[31px] items-center justify-between border-2 border-[#8c8e90] pr-1 pl-[6px] font-['Noto_Sans',sans-serif] text-[14px] text-[#a0a2a4]">
    <div className="flex items-center">
      <label htmlFor="session" className="w-[127px]">Flexi Bars</label>
      <button type="button" aria-label="Previous">
        <svg viewBox="0 0 7 12" className="h-3 w-[7px]"><path d="M7 0v12L0 6z" fill="#c8c8c8" /></svg>
      </button>
      <input
        id="session"
        defaultValue="s20"
        className="mx-1 h-5 w-[90px] bg-[#f5f5dc] text-center text-[16px] text-black"
      />
      <button type="button" aria-label="Next">
        <svg viewBox="0 0 7 12" className="h-3 w-[7px]"><path d="M0 0v12l7-6z" fill="#c8c8c8" /></svg>
      </button>
      <button type="button" className="ml-[12px] h-[22px] w-[53px] border-2 border-[#1a1a80] bg-[#6a6a6a] text-[16px] leading-4 text-[#c8c8c8]">FEED</button>
      <button type="button" className="ml-[7px] h-[22px] w-[53px] border-2 border-[#1a1a80] bg-[#6a6a6a] text-[16px] leading-4 text-[#c8c8c8]">SESS</button>
    </div>
    <div className="flex items-center gap-[90px]">
      <span className="text-[15px]">00:00:12</span>
      <button type="button" aria-label="Close panel" className="h-5 w-[53px] bg-[#ff0000] leading-5 text-white">X</button>
    </div>
  </div>
);

const App = () => (
  <div className="min-w-[3000px] overflow-hidden bg-[#efefef]">
    <TitleBar />
    <MenuBar />
    <MainToolbar />
    <DrawToolbar />

    <main className="mr-1 ml-[2px] flex border-2 border-[#6e7072] border-b-[#c8c8c8] bg-[#22272b] pt-1 pl-[2px]">
      <div className="min-w-0 flex-1">
        <div className="flex border-2 border-[#8c8e90]">
          <div className="relative min-w-0 flex-1 overflow-hidden">
            <PriceChart />
            <ChartHeader />
            <div className="absolute top-[39px] left-[288px] flex w-[404px] flex-col items-center font-['DejaVu_Sans',sans-serif] font-bold whitespace-nowrap">
              <h2 className="text-[78px] leading-[66px] text-[#5eb2f2] [-webkit-text-stroke:3px_#5eb2f2] [text-shadow:2px_3px_1px_#000]">
                XAUUSD
              </h2>
              <p className="text-[27px] leading-[28px] text-[#337a3a] [-webkit-text-stroke:1px_#337a3a]">Carlsberg Don't Do Charts</p>
            </div>
            <NewsReader />
            <ChartFooter />
          </div>
          <aside className="flex w-[177px] shrink-0 flex-col justify-between bg-[#460d18] pt-[23px] pr-4 pb-[17px] pl-[18px]">
            <QuotePanel />
            <PositionPanel />
          </aside>
        </div>
        <FlexiBar />
        <div className="flex h-[30px] overflow-hidden font-['Noto_Sans',sans-serif] text-[14px] text-[#a0a2a4]">
          {TIMES.map(time => (
            <span key={time} className="w-24 shrink-0 whitespace-nowrap">
              <span className="ml-[2px] block h-[6px] w-px bg-[#a0a2a4]" />
              <span className="block leading-[18px]">28 Aug {time}</span>
            </span>
          ))}
        </div>
      </div>
      <PriceScale />
    </main>

    <footer className="flex h-[32px] items-start justify-between border-t-2 border-[#222] font-['Noto_Sans',sans-serif] text-[17px]">
      <div className="flex">
        <button type="button" className="h-7 w-[142px] text-[#808080]">XAUUSD,M1</button>
        <button type="button" className="-mt-[2px] h-[30px] w-[210px] border-2 border-t-0 border-[#111] bg-white text-[#1a1a1a]">
          XAUUSD,M61 (offline)
        </button>
      </div>
      <div className="flex gap-6 pt-[10px] pr-3">
        <button type="button" aria-label="Scroll tabs left">
          <svg viewBox="0 0 6 10" className="h-[10px] w-[6px]"><path d="M6 0v10L0 5z" fill="#808080" /></svg>
        </button>
        <button type="button" aria-label="Scroll tabs right">
          <svg viewBox="0 0 6 10" className="h-[10px] w-[6px]"><path d="M0 0v10l6-5z" fill="#808080" /></svg>
        </button>
      </div>
    </footer>
  </div>
);

export default App;
